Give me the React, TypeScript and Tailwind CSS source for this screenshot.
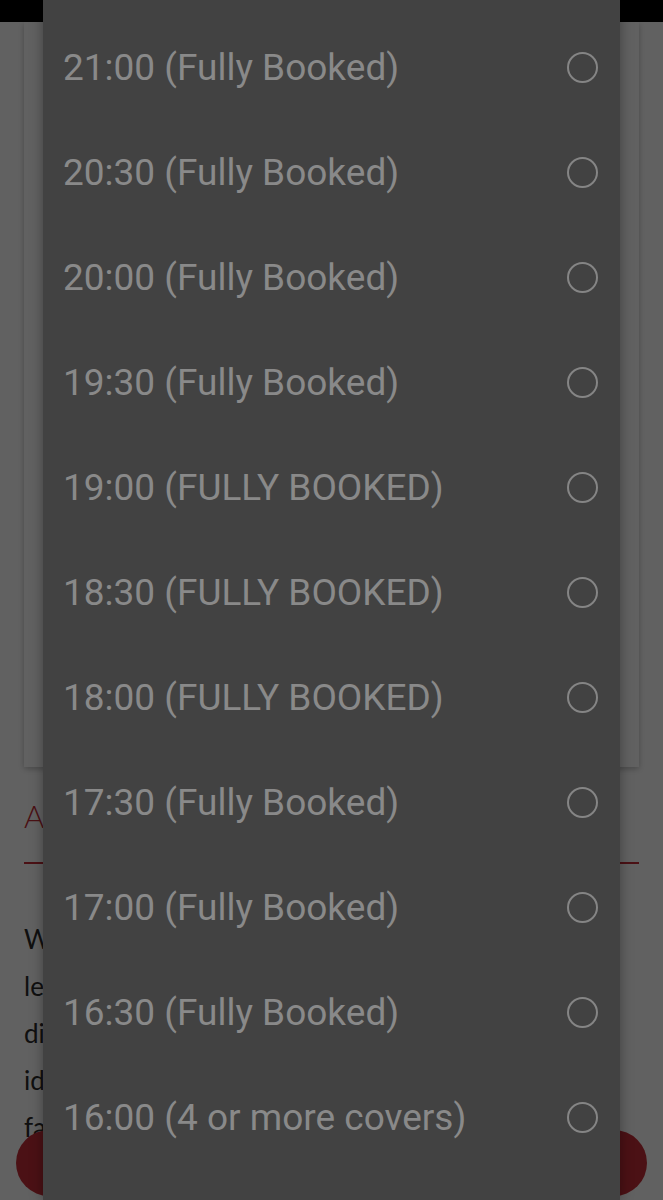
const slots = [
  '21:00 (Fully Booked)',
  '20:30 (Fully Booked)',
  '20:00 (Fully Booked)',
  '19:30 (Fully Booked)',
  '19:00 (FULLY BOOKED)',
  '18:30 (FULLY BOOKED)',
  '18:00 (FULLY BOOKED)',
  '17:30 (Fully Booked)',
  '17:00 (Fully Booked)',
  '16:30 (Fully Booked)',
  '16:00 (4 or more covers)',
  '15:30 (4 or more covers)',
];

const bodyLines = [
  'We offer a relaxed dining experience,',
  'legendary cocktails and the best',
  'dishes from our kitchen, whatever the',
  'idea, be it a catch up with friends or',
  'family celebrations, we have you covered at',
  'fantastic prices all week long.',
];

export default function App() {
  return (
    <div className="relative h-[1200px] w-full overflow-hidden bg-white" style={{ fontFamily: 'Roboto, "Noto Sans", sans-serif' }}>
      {/* page behind the dialog */}
      <div className="h-[22px] bg-black" />
      <div className="px-[24px]">
        <div className="h-[745px] bg-white shadow-[0_2px_6px_rgba(0,0,0,0.25)]" />
        <div className="mt-[26px] border-b-2 border-[#c62f37] pb-[22px] text-[31px] font-light text-[#c62f37]" style={{ fontFamily: 'Lato, sans-serif' }}>
          About Us
        </div>
        <div className="mt-[52px] flex flex-col text-[26px] leading-[47px] text-[#2a2a2a]" style={{ fontFamily: 'Lato, sans-serif' }}>
          {bodyLines.map((l) => (
            <div key={l} className="whitespace-nowrap">{l}</div>
          ))}
        </div>
      </div>
      <div className="absolute left-[16px] top-[1130px] h-[66px] w-[66px] rounded-full bg-[#c62f37]" />
      <div className="absolute left-[581px] top-[1130px] h-[66px] w-[66px] rounded-full bg-[#c62f37]" />

      {/* scrim */}
      <div className="absolute inset-0 bg-black/[0.62]" />

      {/* dialog */}
      <div className="absolute left-[43px] top-0 h-full w-[577px] overflow-hidden bg-[#424242] shadow-[0_0_12px_rgba(0,0,0,0.35)]">
        <div className="pt-[15px]">
          {slots.map((s) => (
            <div key={s} className="flex h-[105px] items-center justify-between pl-[20px] pr-[22px]">
              <span className="text-[37px] leading-none text-[#898989]">{s}</span>
              <span className="h-[31px] w-[31px] rounded-full border-[2.5px] border-[#858585]" />
            </div>
          ))}
        </div>
      </div>
    </div>
  );
}
